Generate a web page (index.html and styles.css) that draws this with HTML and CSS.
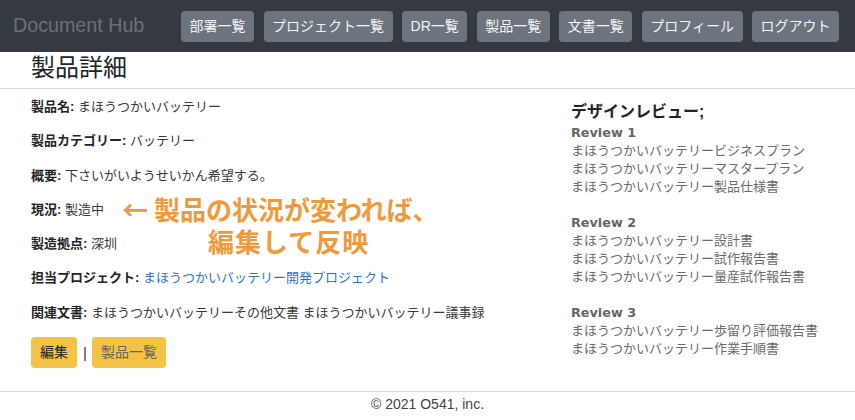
FILE: index.html
```html
<!DOCTYPE html>
<html lang="ja">
<head>
<meta charset="utf-8">
<title>Document Hub</title>
<link rel="stylesheet" href="styles.css">
</head>
<body>
<nav class="navbar">
  <span class="brand">Document Hub</span>
  <ul class="nav-links">
    <li><a class="nav-btn">部署一覧</a></li>
    <li><a class="nav-btn">プロジェクト一覧</a></li>
    <li><a class="nav-btn">DR一覧</a></li>
    <li><a class="nav-btn">製品一覧</a></li>
    <li><a class="nav-btn">文書一覧</a></li>
    <li><a class="nav-btn">プロフィール</a></li>
    <li><a class="nav-btn">ログアウト</a></li>
  </ul>
</nav>
<main class="main">
  <h1 class="title">製品詳細</h1>
  <div class="content">
    <section class="details">
      <p class="row"><strong>製品名:</strong> まほうつかいバッテリー</p>
      <p class="row"><strong>製品カテゴリー:</strong> バッテリー</p>
      <p class="row"><strong>概要:</strong> 下さいがいようせいかん希望する。</p>
      <p class="row"><strong>現況:</strong> 製造中</p>
      <p class="row"><strong>製造拠点:</strong> 深圳</p>
      <p class="row"><strong>担当プロジェクト:</strong> <a class="link">まほうつかいバッテリー開発プロジェクト</a></p>
      <p class="row"><strong>関連文書:</strong> まほうつかいバッテリーその他文書 まほうつかいバッテリー議事録</p>
      <div class="actions">
        <a class="btn-warn btn-edit">編集</a>
        <span class="sep">|</span>
        <a class="btn-warn btn-list">製品一覧</a>
      </div>
      <div class="note">
        <span class="note-line">← 製品の状況が変われば、</span>
        <span class="note-line note-second">編集して反映</span>
      </div>
    </section>
    <aside class="reviews">
      <h3 class="reviews-title">デザインレビュー;</h3>
      <div class="review">
        <div class="review-name">Review 1</div>
        <div class="review-doc">まほうつかいバッテリービジネスプラン</div>
        <div class="review-doc">まほうつかいバッテリーマスタープラン</div>
        <div class="review-doc">まほうつかいバッテリー製品仕様書</div>
      </div>
      <div class="review">
        <div class="review-name">Review 2</div>
        <div class="review-doc">まほうつかいバッテリー設計書</div>
        <div class="review-doc">まほうつかいバッテリー試作報告書</div>
        <div class="review-doc">まほうつかいバッテリー量産試作報告書</div>
      </div>
      <div class="review">
        <div class="review-name">Review 3</div>
        <div class="review-doc">まほうつかいバッテリー歩留り評価報告書</div>
        <div class="review-doc">まほうつかいバッテリー作業手順書</div>
      </div>
    </aside>
  </div>
</main>
<footer class="footer">© 2021 O541, inc.</footer>
</body>
</html>
```

FILE: styles.css
```css
* { box-sizing: border-box; }
html, body { margin: 0; padding: 0; }
body {
  font-family: "Liberation Sans", "Noto Sans CJK JP", sans-serif;
  color: #212529;
  background: #fff;
  width: 855px;
  height: 420px;
  overflow: hidden;
}
.navbar {
  height: 52px;
  background: #343a40;
  display: flex;
  align-items: center;
  justify-content: space-between;
  padding: 0 16px 0 13px;
}
.brand {
  font-family: "Liberation Sans", sans-serif;
  font-size: 19.7px;
  color: #6b7075;
  margin-top: -1px;
}
.nav-links {
  list-style: none;
  margin: 0;
  padding: 0;
  display: flex;
  gap: 9.5px;
}
.nav-btn {
  display: block;
  height: 31px;
  line-height: 31px;
  padding: 0 8.5px;
  background: #6c757d;
  color: #f4f4f4;
  border-radius: 4px;
  font-size: 14px;
  font-family: "Liberation Sans", "Noto Sans CJK JP", sans-serif;
}
.main { position: relative; }
.title {
  margin: 0;
  font-weight: normal;
  font-size: 24px;
  line-height: 32px;
  padding: 0 0 4px 31px;
  border-bottom: 1px solid #d6d6d6;
  color: #212529;
}
.content {
  display: grid;
  grid-template-columns: 540px 1fr;
  padding-left: 31px;
}
.details {
  position: relative;
  padding-top: 8px;
}
.row {
  margin: 0 0 14.3px;
  font-size: 13px;
  line-height: 20px;
  color: #3a3a3a;
}
.row strong { color: #212529; font-weight: bold; }
.link { color: #2f74cf; }
.actions {
  display: flex;
  align-items: center;
  margin-top: 1px;
}
.btn-warn {
  display: block;
  height: 31px;
  line-height: 31px;
  padding: 0 9px;
  background: #f4c244;
  border-radius: 4px;
  font-size: 14px;
}
.btn-edit { color: #212529; }
.btn-list { color: #6a6658; }
.sep {
  font-size: 15px;
  color: #333;
  margin: 0 5px 0 6px;
  font-family: "Liberation Sans", sans-serif;
}
.note {
  position: absolute;
  left: 91px;
  top: 104px;
  color: #f09a3b;
  font-weight: bold;
  font-size: 26px;
  line-height: 32px;
  font-family: "Noto Sans CJK JP", sans-serif;
  white-space: nowrap;
}
.note-line { display: block; }
.note-second { padding-left: 86px; letter-spacing: 1px; }
.reviews {
  padding-top: 10px;
  color: #666;
  font-size: 13px;
}
.reviews-title {
  margin: 0;
  font-size: 16px;
  line-height: 25px;
  color: #212529;
  font-weight: bold;
}
.review { margin-bottom: 18px; }
.review-name {
  font-family: "DejaVu Sans", sans-serif;
  font-weight: bold;
  font-size: 12.8px;
  line-height: 18px;
  color: #666;
}
.review-doc {
  line-height: 18px;
  color: #6b6b6b;
}
.footer {
  position: absolute;
  left: 0;
  right: 0;
  top: 391px;
  border-top: 1px solid #d6d6d6;
  text-align: center;
  font-size: 14px;
  line-height: 20px;
  padding-top: 2px;
  color: #444;
}
```
